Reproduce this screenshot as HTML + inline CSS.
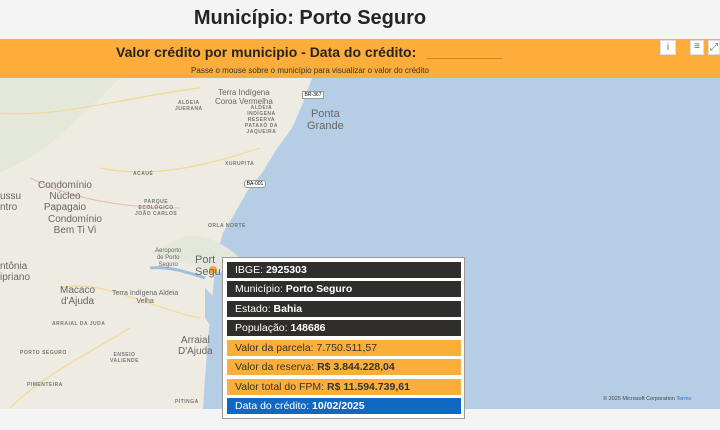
<!DOCTYPE html>
<html><head><meta charset="utf-8"><style>
*{margin:0;padding:0;box-sizing:border-box}
body{width:720px;height:430px;overflow:hidden;background:#f4f4f4;font-family:"Liberation Sans","DejaVu Sans",sans-serif;position:relative}
.title{position:absolute;top:7px;left:0;width:620px;text-align:center;font-size:20px;font-weight:bold;color:#252423}
.band{position:absolute;top:39px;left:0;width:720px;height:39px;background:#fdae3a}
.band .h{position:absolute;top:5px;left:116px;font-size:14px;font-weight:bold;color:#252423}
.band .line{position:absolute;top:19px;left:427px;width:76px;border-bottom:1px solid #c98a2c}
.band .s{position:absolute;top:27px;left:0;width:620px;text-align:center;font-size:8px;color:#333}
.ic{position:absolute;background:#fff;border:1px solid #ddd;font-size:10px;color:#666;text-align:center}
.map{position:absolute;top:78px;left:0;width:720px;height:331px;overflow:hidden}
.lbl{position:absolute;color:#666;font-size:10px;line-height:11px;text-align:center}
.sm{position:absolute;color:#777;font-size:5px;font-weight:bold;letter-spacing:.5px;text-align:center;line-height:6px}
.tip{position:absolute;left:222px;top:257px;width:243px;height:162px;background:#fff;border:1px solid #999}
.row{position:absolute;left:4px;width:234px;height:16px;font-size:10.5px;line-height:16px;padding-left:8px;white-space:nowrap}
.d{background:#2f2e2c;color:#fff}.o{background:#fcae3a;color:#333}.b{background:#1068c1;color:#fff}
</style></head><body>
<div class="title">Município: Porto Seguro</div>
<div class="band"><div class="h">Valor crédito por municipio - Data do crédito:</div><div class="line"></div>
<div class="s">Passe o mouse sobre o município para visualizar o valor do crédito</div></div>
<div class="ic" style="left:660px;top:40px;width:16px;height:15px;line-height:14px">i</div>
<div class="ic" style="left:690px;top:40px;width:14px;height:15px;line-height:12px">≡</div>
<div class="ic" style="left:708px;top:40px;width:12px;height:15px;line-height:14px">⤢</div>
<div class="map">
<svg width="720" height="331" style="position:absolute;left:0;top:0">
<rect width="720" height="331" fill="#b6cde6"/>
<path d="M0 0 L312 0 L303 25 L292 50 L276 72 L262 95 L248 112 L235 135 L223 155 L218 172 L214 200 L212 225 L208 260 L205 300 L203 331 L0 331 Z" fill="#eeebe3"/>
<path d="M0 0 L120 0 C90 30 60 60 30 80 L0 95 Z" fill="#e3e8da"/>
<path d="M180 160 C200 150 230 170 240 180 L225 195 C200 190 170 180 150 175 Z" fill="#e4e8da"/>
<path d="M150 190 C170 188 190 195 205 200" stroke="#9fbde0" stroke-width="3" fill="none"/>
<path d="M205 210 L215 220 L212 250 L205 240 Z" fill="#b6cde6"/>
<path d="M0 35 C60 40 120 20 200 10 M60 210 C100 200 150 230 200 240 M10 330 C40 300 80 280 130 250 M100 90 C150 100 200 90 260 70" stroke="#f2d890" stroke-width="1.2" fill="none"/>
<path d="M30 100 C70 120 120 130 180 130" stroke="#e2b9b9" stroke-width="1" fill="none"/>
<circle cx="213" cy="192" r="4" fill="#f7a53a"/>
</svg>
<div class="lbl" style="left:215px;top:10px;font-size:8px;line-height:9px">Terra Indígena<br>Coroa Vermelha</div>
<div class="lbl" style="left:307px;top:30px;font-size:11px;line-height:12px">Ponta<br>Grande</div>
<div class="lbl" style="left:38px;top:102px">Condomínio<br>Núcleo<br>Papagaio</div>
<div class="lbl" style="left:0;top:113px;text-align:left">ussu<br>ntro</div>
<div class="lbl" style="left:48px;top:136px">Condomínio<br>Bem Ti Vi</div>
<div class="lbl" style="left:0;top:183px;text-align:left">ntônia<br>ipriano</div>
<div class="lbl" style="left:60px;top:207px">Macaco<br>d'Ajuda</div>
<div class="lbl" style="left:178px;top:257px">Arraial<br>D'Ajuda</div>
<div class="lbl" style="left:195px;top:176px;font-size:11px;line-height:12px;text-align:left">Port<br>Segu</div>
<div class="lbl" style="left:112px;top:212px;font-size:7px;line-height:8px">Terra Indígena Aldeia<br>Velha</div>
<div class="lbl" style="left:155px;top:170px;font-size:6px;line-height:7px">Aeroporto<br>de Porto<br>Seguro</div>
<div class="sm" style="left:175px;top:22px">ALDEIA<br>JUERANA</div>
<div class="sm" style="left:245px;top:27px">ALDEIA<br>INDÍGENA<br>RESERVA<br>PATAXÓ DA<br>JAQUEIRA</div>
<div class="sm" style="left:225px;top:83px">XURUPITA</div>
<div class="sm" style="left:133px;top:93px">ACAUÉ</div>
<div class="sm" style="left:135px;top:121px">PARQUE<br>ECOLÓGICO<br>JOÃO CARLOS</div>
<div class="sm" style="left:208px;top:145px">ORLA NORTE</div>
<div class="sm" style="left:52px;top:243px">ARRAIAL DA JUDA</div>
<div class="sm" style="left:20px;top:272px">PORTO SEGURO</div>
<div class="sm" style="left:110px;top:274px">ENSEIO<br>VALIENDE</div>
<div class="sm" style="left:27px;top:304px">PIMENTEIRA</div>
<div class="sm" style="left:175px;top:321px">PITINGA</div>
<div style="position:absolute;left:302px;top:13px;width:22px;height:8px;background:#fff;border:1px solid #999;font-size:5px;text-align:center">BR-367</div>
<div style="position:absolute;left:244px;top:102px;width:22px;height:8px;background:#fff;border:1px solid #999;border-radius:3px;font-size:5px;text-align:center">BA-001</div>
<div style="position:absolute;left:603px;top:318px;font-size:5.5px;color:#444">© 2025 Microsoft Corporation <span style="color:#36c">Terms</span></div>
</div>
<div class="tip">
<div class="row d" style="top:4px">IBGE: <b>2925303</b></div>
<div class="row d" style="top:23px">Município: <b>Porto Seguro</b></div>
<div class="row d" style="top:43px">Estado: <b>Bahia</b></div>
<div class="row d" style="top:62px">População: <b>148686</b></div>
<div class="row o" style="top:82px">Valor da parcela: 7.750.511,57</div>
<div class="row o" style="top:101px">Valor da reserva: <b>R$ 3.844.228,04</b></div>
<div class="row o" style="top:121px">Valor total do FPM: <b>R$ 11.594.739,61</b></div>
<div class="row b" style="top:140px">Data do crédito: <b>10/02/2025</b></div>
</div>
</body></html>
